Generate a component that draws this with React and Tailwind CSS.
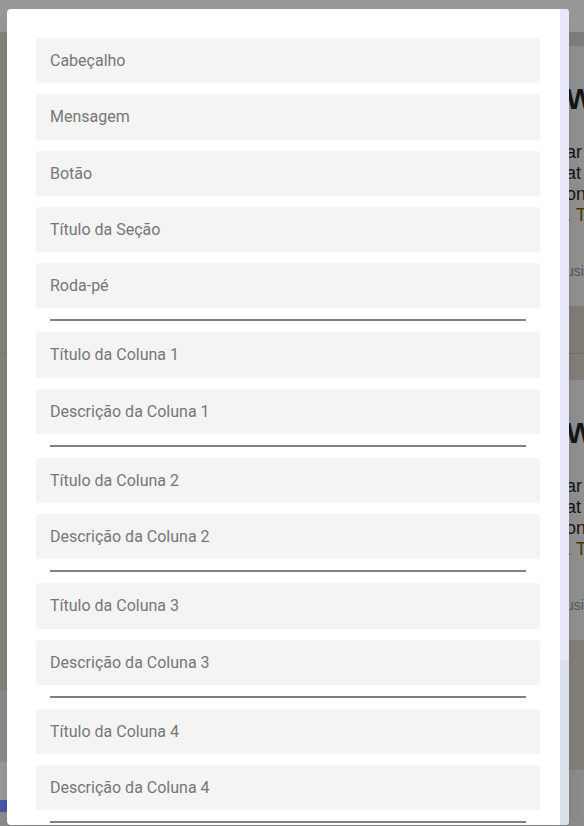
import { useState } from "react";

const topFields = ["Cabeçalho", "Mensagem", "Botão", "Título da Seção", "Roda-pé"];

const columns = [1, 2, 3, 4].map((n) => ({
  title: `Título da Coluna ${n}`,
  desc: `Descrição da Coluna ${n}`,
}));

/* ---------------- FIELD ---------------- */

function Field({ label, value, onChange }) {
  return (
    <input
      placeholder={label}
      value={value || ""}
      onChange={(e) => onChange(label, e.target.value)}
      className="block w-full h-[45.25px] mb-[11px] shrink-0 px-[14px] bg-[#f4f4f4] rounded-t-[4px] text-[16px] text-[#333] placeholder:text-[#777] outline-none font-['Roboto',sans-serif]"
    />
  );
}

function Divider() {
  return <div className="h-[2px] mx-[14px] mb-[11px] shrink-0 bg-[#808080]" />;
}

/* ---------------- BACKGROUND CARD ---------------- */

function BgCard() {
  return (
    <div className="h-[260px] shrink-0 bg-[#8f8f8f] pl-[3px] pt-[38px] whitespace-nowrap font-['Liberation_Sans',sans-serif]">
      <div className="text-[30px] leading-[30px] font-bold text-[#161616]">W</div>
      <div className="mt-[28px] text-[18px] leading-[21px] text-[#141414]">
        <div>ar</div>
        <div>at</div>
        <div>on</div>
        <div>
          . <span className="text-[#4a3505]">T</span>
        </div>
      </div>
      <div className="mt-[35px] text-[14px] leading-[20px] text-[#555]">usi</div>
    </div>
  );
}

export default function App() {
  const [values, setValues] = useState({});

  const update = (key, v) => setValues((prev) => ({ ...prev, [key]: v }));

  return (
    <div className="relative w-[584px] h-[826px] overflow-hidden bg-[#8b8b8b]">
      {/* PAGE BEHIND THE MODAL */}
      <div className="h-[32px] bg-[#989898]" />
      <div className="flex h-[794px]">
        <div className="w-[563px] flex flex-col">
          <div className="h-[322px] bg-[#85827d] border-b border-[#777]" />
          <div className="h-[336px] bg-[#85827d]" />
          <div className="h-[72px] bg-[#8b8b8b]" />
          <div className="h-[38px] bg-[#9a9a9a]" />
          <div className="flex items-start">
            <div className="w-[7px] h-[12px] bg-[#4b55a8]" />
          </div>
        </div>
        <div className="flex-1 flex flex-col overflow-hidden">
          <div className="h-[14px] shrink-0 bg-[#7d7d7d]" />
          <BgCard />
          <div className="h-[48px] shrink-0 bg-[#807b75] border-b border-[#6f6f6f]" />
          <div className="h-[26px] shrink-0 bg-[#827d77]" />
          <BgCard />
          <div className="h-[130px] shrink-0 bg-[#827d77]" />
          <div className="flex-1 bg-[#8b8b8b]" />
        </div>
      </div>

      {/* MODAL */}
      <div className="absolute left-[7px] top-[9px] w-[562px] h-[816px] bg-white rounded-[4px] overflow-hidden flex shadow-lg">
        <div className="flex-1 flex flex-col overflow-hidden pt-[29px] pl-[29px] pr-[20px]">
          {topFields.map((f) => (
            <Field key={f} label={f} value={values[f]} onChange={update} />
          ))}
          <Divider />
          {columns.map((c) => (
            <div key={c.title} className="flex flex-col shrink-0">
              <Field label={c.title} value={values[c.title]} onChange={update} />
              <Field label={c.desc} value={values[c.desc]} onChange={update} />
              <Divider />
            </div>
          ))}
        </div>

        {/* SCROLLBAR */}
        <div className="w-[9px] flex flex-col bg-[#d9e0e7]">
          <div className="h-[652px] bg-[#e8e8fa] rounded-b-[4px]" />
        </div>
      </div>
    </div>
  );
}
